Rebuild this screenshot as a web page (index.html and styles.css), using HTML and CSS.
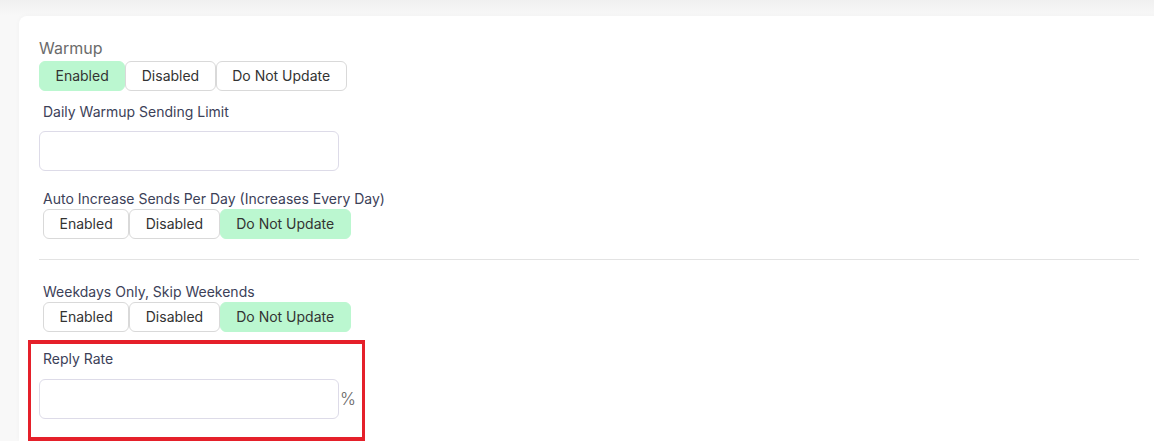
FILE: index.html
```html
<!DOCTYPE html>
<html lang="en">
<head>
<meta charset="utf-8">
<title>Warmup settings</title>
<link rel="stylesheet" href="styles.css">
</head>
<body>
<div class="page">
  <div class="card">
    <div class="section-title">Warmup</div>
    <div class="toggle-group">
      <button class="toggle active">Enabled</button>
      <button class="toggle">Disabled</button>
      <button class="toggle">Do Not Update</button>
    </div>

    <label class="field-label lbl-daily">Daily Warmup Sending Limit</label>
    <div class="input-row row-daily">
      <input class="text-input" type="text">
    </div>

    <label class="field-label lbl-auto">Auto Increase Sends Per Day (Increases Every Day)</label>
    <div class="toggle-group indented">
      <button class="toggle">Enabled</button>
      <button class="toggle">Disabled</button>
      <button class="toggle active">Do Not Update</button>
    </div>

    <hr class="divider">

    <label class="field-label lbl-week">Weekdays Only, Skip Weekends</label>
    <div class="toggle-group indented">
      <button class="toggle">Enabled</button>
      <button class="toggle">Disabled</button>
      <button class="toggle active">Do Not Update</button>
    </div>

    <div class="highlight">
      <label class="field-label lbl-reply">Reply Rate</label>
      <div class="input-row row-reply">
        <input class="text-input" type="text">
        <span class="suffix">%</span>
      </div>
    </div>
  </div>
</div>
</body>
</html>
```
FILE: styles.css
```css
html, body {
  margin: 0;
  padding: 0;
  background: #ffffff;
  font-family: Inter, "Noto Sans", sans-serif;
}

.page {
  height: 441px;
  overflow: hidden;
  padding: 16px 0 0 19px;
  box-sizing: border-box;
  background: linear-gradient(#f0f0f0 0, #f8f8f8 16px, #f8f8f8 100%);
}

.card {
  width: 1140px;
  box-sizing: border-box;
  background: #ffffff;
  border-radius: 8px 0 0 0;
  padding: 20px 20px 0 20px;
  box-shadow: 0 0 5px rgba(0, 0, 0, 0.03);
}

.section-title {
  font-size: 16px;
  line-height: 22px;
  color: #6b6b6b;
  margin-top: 1px;
  margin-bottom: 2px;
}

.toggle-group {
  display: flex;
  height: 30px;
}

.toggle-group.indented {
  margin-left: 4px;
}

.toggle {
  font-family: Inter, "Noto Sans", sans-serif;
  font-size: 14px;
  color: #333333;
  background: #ffffff;
  border: 1px solid #d9d9d9;
  border-radius: 6px;
  padding: 0 15.5px;
  height: 30px;
  margin: 0;
  line-height: 28px;
}

.toggle.active {
  background: #bbf7d0;
  border-color: #bbf7d0;
}

.field-label {
  display: block;
  font-size: 14px;
  line-height: 20px;
  color: #3c4158;
  padding-left: 4px;
}

.lbl-daily { margin-top: 11px; }
.lbl-auto { margin-top: 18px; }

.input-row {
  display: flex;
  align-items: center;
}

.row-daily { margin-top: 9px; }
.row-reply { margin-top: 10px; }

.text-input {
  width: 300px;
  height: 40px;
  box-sizing: border-box;
  border: 1px solid #dddbe8;
  border-radius: 6px;
  background: #ffffff;
  margin: 0;
  padding: 0 10px;
  font-family: Inter, "Noto Sans", sans-serif;
  font-size: 14px;
}

.suffix {
  font-size: 17px;
  line-height: 20px;
  font-weight: 300;
  color: #666666;
  margin-left: 1px;
  padding-top: 0;
}

.divider {
  border: none;
  border-top: 1px solid #e3e3e3;
  margin: 20px 0 22px 0;
  height: 0;
}

.highlight {
  margin: 8px 0 0 -11px;
  width: 337px;
  height: 101px;
  box-sizing: border-box;
  border: 3px solid #e5202a;
  border-top-width: 4px;
  border-bottom-width: 4px;
  padding: 5px 0 0 8px;
}
```
